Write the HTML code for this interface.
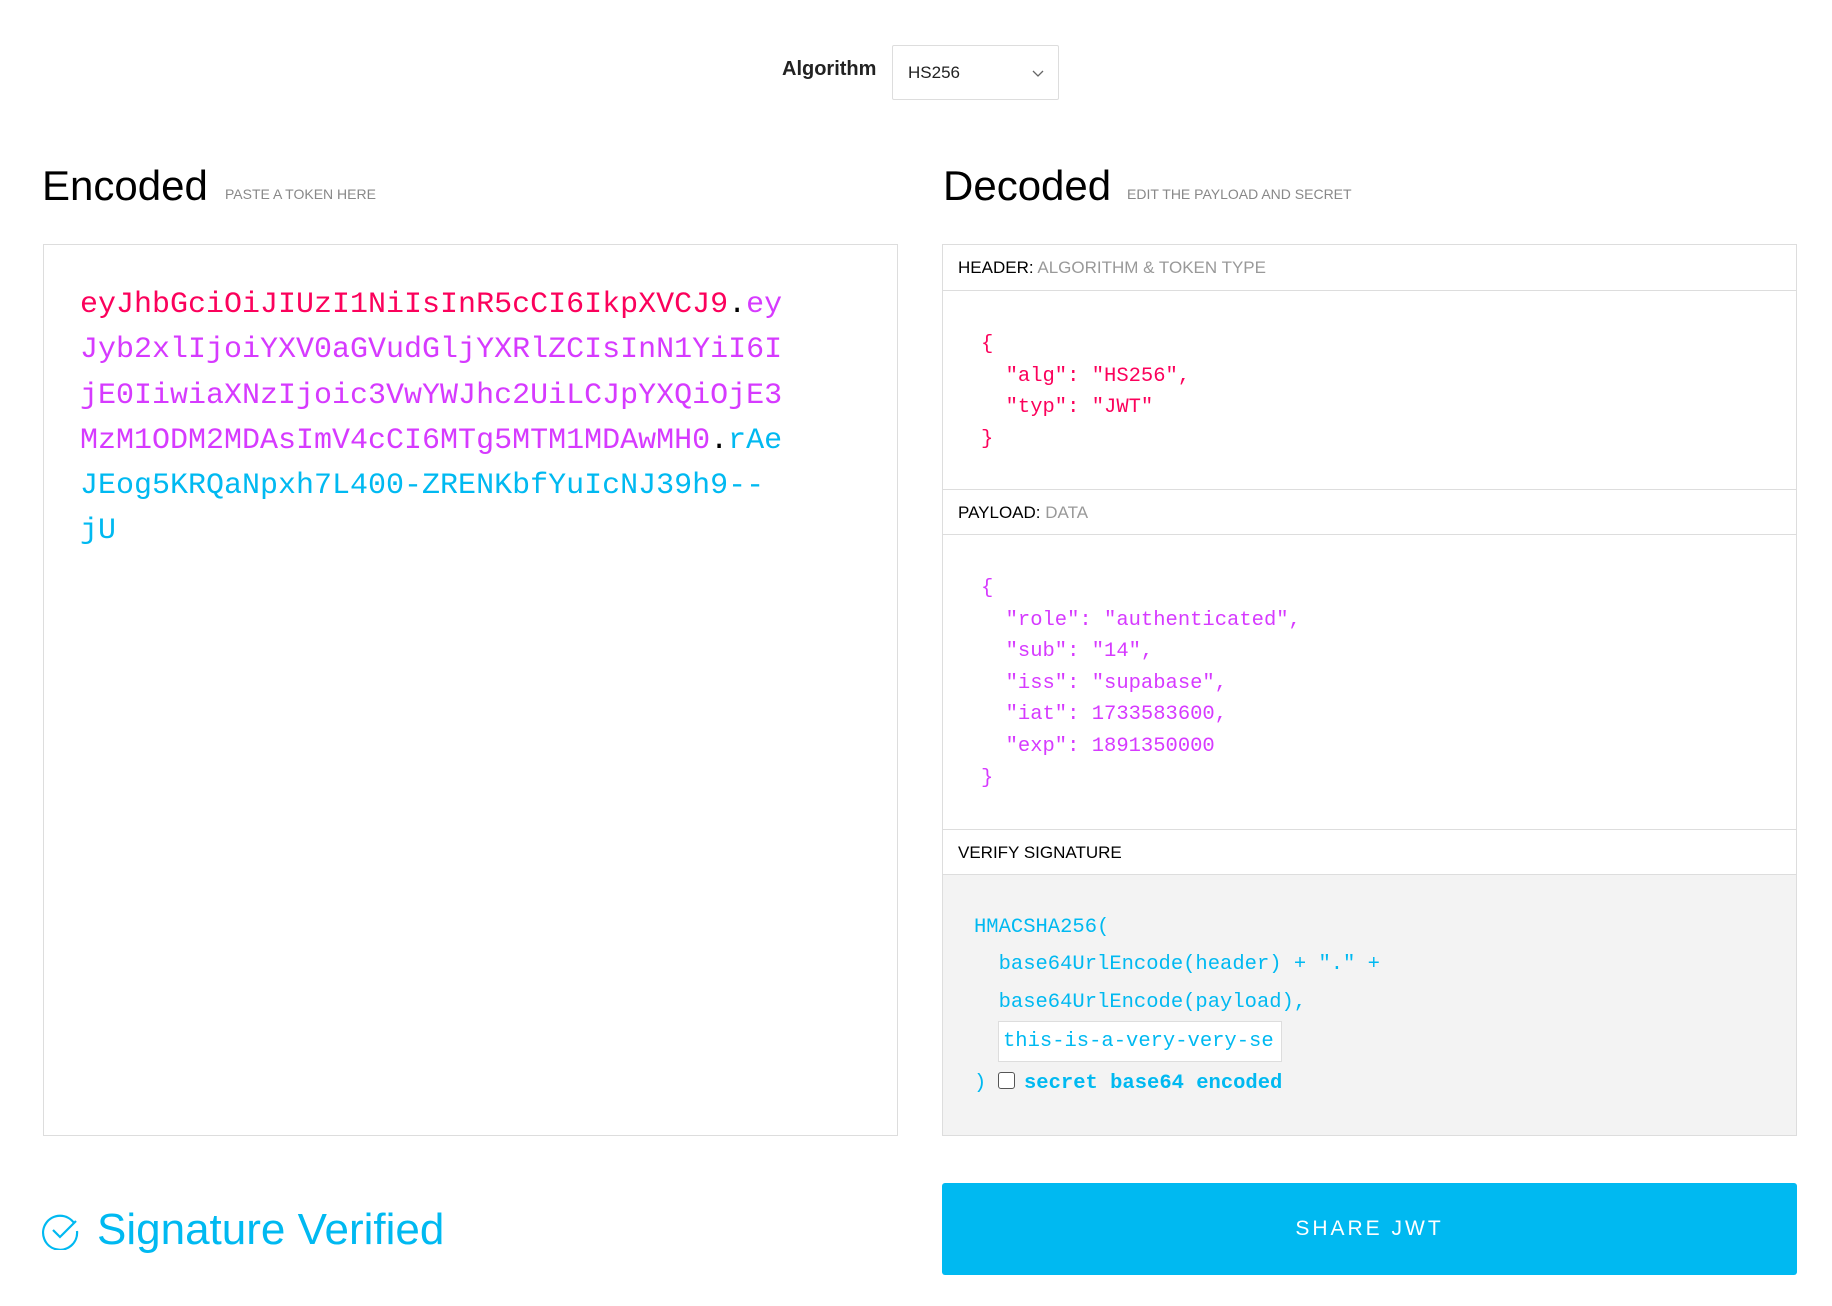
<!DOCTYPE html>
<html><head><meta charset="utf-8"><style>
body{margin:0;width:1832px;height:1306px;background:#fff;font-family:"Liberation Sans",sans-serif;position:relative;overflow:hidden}
.a{position:absolute}
.mono{font-family:"Liberation Mono",monospace}
.r{color:#fb015b}.p{color:#d63aff}.b{color:#00b9f1}.k{color:#000}
.row{position:absolute;left:0;right:0;height:46px;border-bottom:1px solid #ddd;font-size:17px;line-height:46px;padding-left:15px;box-sizing:border-box}
.row .g{color:#999}
</style></head><body>
<div class="a" style="left:782px;top:58px;font-size:20px;font-weight:bold;color:#222">Algorithm</div>
<div class="a" style="left:892px;top:45px;width:167px;height:55px;border:1px solid #ddd;border-radius:2px;box-sizing:border-box;font-size:17px;line-height:53px;padding-left:15px;color:#222">HS256
<svg class="a" style="right:14px;top:24px" width="12" height="8" viewBox="0 0 12 8"><path d="M1 1l5 5 5-5" stroke="#666" fill="none" stroke-width="1.3"/></svg></div>

<div class="a" style="left:42px;top:162px;font-size:42px;color:#000">Encoded</div>
<div class="a" style="left:225px;top:186px;font-size:14px;color:#888">PASTE A TOKEN HERE</div>
<div class="a" style="left:943px;top:162px;font-size:42px;color:#000">Decoded</div>
<div class="a" style="left:1127px;top:186px;font-size:14px;color:#888">EDIT THE PAYLOAD AND SECRET</div>

<div class="a" style="left:43px;top:244px;width:855px;height:892px;border:1px solid #ddd;box-sizing:border-box"></div>
<div class="a mono" style="left:80px;top:283px;font-size:30px;line-height:45.3px;white-space:pre"><span class="r">eyJhbGciOiJIUzI1NiIsInR5cCI6IkpXVCJ9</span><span class="k">.</span><span class="p">ey
Jyb2xlIjoiYXV0aGVudGljYXRlZCIsInN1YiI6I
jE0IiwiaXNzIjoic3VwYWJhc2UiLCJpYXQiOjE3
MzM1ODM2MDAsImV4cCI6MTg5MTM1MDAwMH0</span><span class="k">.</span><span class="b">rAe
JEog5KRQaNpxh7L400-ZRENKbfYuIcNJ39h9--
jU</span></div>

<div class="a" style="left:942px;top:244px;width:855px;height:892px;border:1px solid #ddd;box-sizing:border-box;overflow:hidden">
<div class="row" style="top:0">HEADER: <span class="g">ALGORITHM &amp; TOKEN TYPE</span></div>
<div class="row" style="top:244px;border-top:1px solid #ddd">PAYLOAD: <span class="g">DATA</span></div>
<div class="row" style="top:584px;border-top:1px solid #ddd">VERIFY SIGNATURE</div>
<div class="a" style="left:0;right:0;top:630px;bottom:0;background:#f3f3f3"></div>
<div class="a mono r" style="left:38px;top:84px;font-size:20.5px;line-height:31.7px;white-space:pre">{
  "alg": "HS256",
  "typ": "JWT"
}</div>
<div class="a mono p" style="left:38px;top:328px;font-size:20.5px;line-height:31.6px;white-space:pre">{
  "role": "authenticated",
  "sub": "14",
  "iss": "supabase",
  "iat": 1733583600,
  "exp": 1891350000
}</div>
<div class="a mono b" style="left:31px;top:664px;font-size:20.5px;line-height:37.4px;white-space:pre">HMACSHA256(
  base64UrlEncode(header) + "." +
  base64UrlEncode(payload),</div>
<div class="a mono b" style="left:55px;top:776px;width:284px;height:41px;background:#fff;border:1px solid #ddd;box-sizing:border-box;font-size:20.5px;line-height:39px;padding-left:4px;overflow:hidden;white-space:nowrap">this-is-a-very-very-se</div>
<div class="a mono b" style="left:31px;top:820px;font-size:20.5px;line-height:37.6px;white-space:pre">) </div>
<div class="a" style="left:55px;top:827px;width:17px;height:17px;border:1.5px solid #555;border-radius:3px;background:#fff;box-sizing:border-box"></div>
<div class="a mono b" style="left:81px;top:820px;font-size:20.5px;line-height:37.6px;font-weight:bold">secret base64 encoded</div>
</div>

<svg class="a" style="left:41px;top:1211px" width="39" height="39" viewBox="0 0 39 39"><path d="M33 12 A17 17 0 1 0 36 20" fill="none" stroke="#00b9f1" stroke-width="2.2"/><path d="M12 19l7 7 16-16" fill="none" stroke="#00b9f1" stroke-width="2.2"/></svg>
<div class="a b" style="left:97px;top:1205px;font-size:44px">Signature Verified</div>

<div class="a" style="left:942px;top:1183px;width:855px;height:92px;background:#00b9f1;border-radius:3px;color:#fff;font-size:21px;letter-spacing:3px;text-align:center;line-height:92px">SHARE JWT</div>
</body></html>
